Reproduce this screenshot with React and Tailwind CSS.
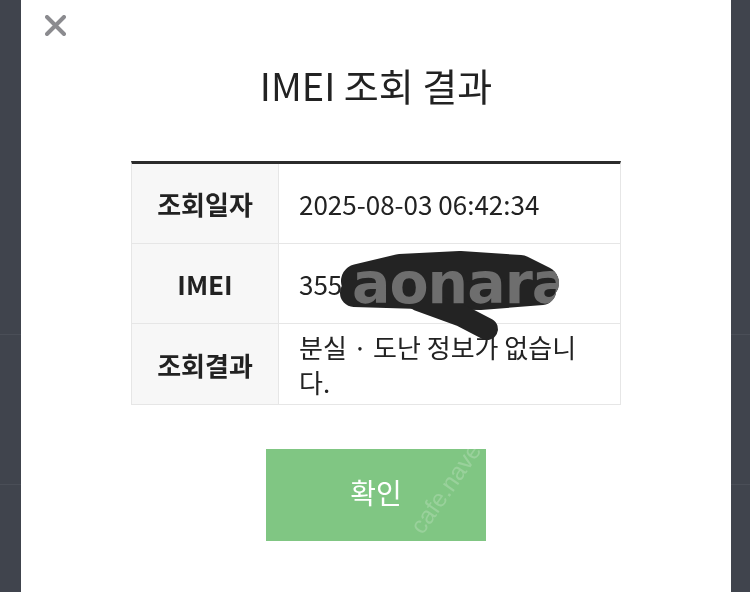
import React from 'react';

const font = { fontFamily: '"Noto Sans CJK KR", "Noto Sans", sans-serif' };

const rows = [
  { label: '조회일자', value: '2025-08-03 06:42:34' },
  { label: 'IMEI', value: '3559' },
  { label: '조회결과', value: ['분실 · 도난 정보가 없습니', '다.'] },
];

export default function App() {
  return (
    <div className="relative flex h-[592px] w-[750px] overflow-hidden bg-[#40444d]" style={font}>
      {/* faint lines of the page behind the modal */}
      <div className="absolute left-0 top-[334px] h-px w-[21px] bg-[#4a4e57]" />
      <div className="absolute left-0 top-[484px] h-px w-[21px] bg-[#4a4e57]" />
      <div className="absolute right-0 top-[334px] h-px w-[19px] bg-[#4a4e57]" />
      <div className="absolute right-0 top-[484px] h-px w-[19px] bg-[#4a4e57]" />

      {/* Modal */}
      <div className="relative ml-[21px] flex h-full w-[710px] flex-col items-center bg-white">
        <button className="absolute left-[24px] top-[15px] h-[21px] w-[21px]">
          <svg viewBox="0 0 21 21" className="h-[21px] w-[21px]">
            <path d="M2 2L19 19M19 2L2 19" stroke="#8b8b8f" strokeWidth="4" strokeLinecap="round" />
          </svg>
        </button>

        <h2 className="mt-[59px] text-[38px] leading-[52px] text-[#222]">IMEI 조회 결과</h2>

        {/* Result table */}
        <div className="mt-[50px] w-[490px] border-x border-b border-t-[3px] border-x-[#e6e6e6] border-b-[#e6e6e6] border-t-[#2b2b2b]">
          {rows.map((row, i) => (
            <div
              key={row.label}
              className={`grid h-[80px] grid-cols-[147px_1fr] ${i < rows.length - 1 ? 'border-b border-[#e6e6e6]' : ''}`}
            >
              <div className="flex items-center justify-center border-r border-[#e6e6e6] bg-[#f7f7f7] text-[26px] font-bold text-[#222]">
                {row.label}
              </div>
              <div className="flex items-center pl-[20px] text-[26px] leading-[35px] text-[#222]">
                {Array.isArray(row.value) ? (
                  <div className="whitespace-nowrap">
                    {row.value[0]}
                    <br />
                    {row.value[1]}
                  </div>
                ) : (
                  <span className="whitespace-nowrap">{row.value}</span>
                )}
              </div>
            </div>
          ))}
        </div>

        <button className="relative mt-[44px] flex h-[92px] w-[220px] items-center justify-center overflow-hidden bg-[#80c683] pb-[6px] text-[28px] text-white">
          <span className="absolute left-[150px] top-[64px] origin-left -rotate-[55deg] whitespace-nowrap text-[24px] text-white/20" style={{ fontFamily: '"Liberation Sans", sans-serif' }}>
            cafe.naver
          </span>
          <span className="relative">확인</span>
        </button>
      </div>

      {/* Redaction scribble */}
      <svg className="pointer-events-none absolute left-0 top-0" width="750" height="592" viewBox="0 0 750 592">
        <g stroke="#232323" strokeLinecap="round" strokeLinejoin="round" fill="none">
          <polyline points="358,281 400,271 460,268 520,272 542,283" strokeWidth="34" />
          <polyline points="354,293 420,295 480,296 542,291" strokeWidth="28" />
          <polyline points="418,300 462,316 487,329" strokeWidth="22" />
        </g>
      </svg>

      {/* Watermark */}
      <span
        className="pointer-events-none absolute left-[352px] top-[255px] whitespace-nowrap text-[57px] font-bold leading-[56px] tracking-[-1px] text-[#6e6e6e] mix-blend-lighten"
        style={{ fontFamily: '"DejaVu Sans", sans-serif' }}
      >
        aonara
      </span>
    </div>
  );
}
